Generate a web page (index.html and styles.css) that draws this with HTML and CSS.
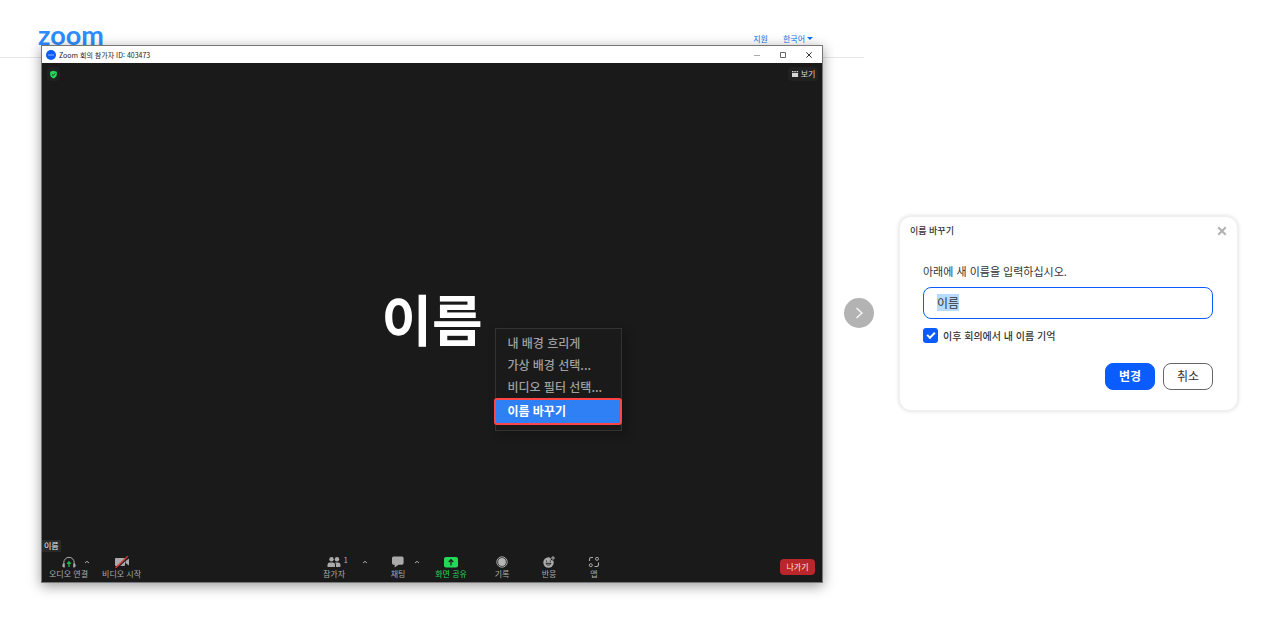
FILE: index.html
```html
<!DOCTYPE html>
<html lang="ko">
<head>
<meta charset="utf-8">
<meta name="viewport" content="width=device-width, initial-scale=1">
<title>Zoom 이름 바꾸기</title>
<link rel="stylesheet" href="styles.css">
</head>
<body>
<main class="guide">
  <section class="site">
    <header class="site-header">
      <a class="logo" href="#">zoom</a>
      <nav class="site-nav">
        <a href="#">지원</a>
        <a href="#" class="language">한국어 <span class="triangle"></span></a>
      </nav>
    </header>

    <div class="window">
      <div class="titlebar">
        <svg class="app-icon" viewBox="0 0 10 10" aria-hidden="true"><circle cx="5" cy="5" r="5" fill="#0b5cff"/><path d="M2 5h6" stroke="#8db6ff" stroke-width="1"/></svg>
        <h1 class="window-title">Zoom 회의 참가자 ID: 403473</h1>
        <div class="window-buttons">
          <button type="button" aria-label="최소화"><svg viewBox="0 0 8 8"><path d="M1 4.500h6" stroke="#aaa"/></svg></button>
          <button type="button" aria-label="최대화"><svg viewBox="0 0 8 8"><path d="M1.500 1.500h5v5h-5z" fill="none" stroke="#666"/></svg></button>
          <button type="button" aria-label="닫기"><svg viewBox="0 0 8 8"><path d="M1.300 1.300l5.400 5.400M6.700 1.300L1.300 6.700" stroke="#333"/></svg></button>
        </div>
      </div>

      <div class="video">
        <div class="video-top">
          <button type="button" class="chip shield" aria-label="보안"><svg viewBox="0 0 10 10"><path d="M5 .7L8.700 2v2.700C8.700 7 7.200 8.600 5 9.400 2.800 8.600 1.300 7 1.300 4.700V2z" fill="#23d959"/><path d="M3.300 5l1.300 1.200 2.200-2.400" fill="none" stroke="#1a1a1a"/></svg></button>
          <button type="button" class="chip view"><svg viewBox="0 0 8 8"><path d="M1 1h1.500v1.300H1zM3.300 1h1.500v1.300H3.300zM5.600 1h1.500v1.300H5.600zM1 3h6.100v4H1z" fill="#d5d5d5"/></svg>보기</button>
        </div>
        <div class="video-stage">
          <div class="participant">
            <p class="participant-name">이름</p>
            <div class="menu" role="menu">
              <button type="button" role="menuitem">내 배경 흐리게</button>
              <button type="button" role="menuitem">가상 배경 선택...</button>
              <button type="button" role="menuitem">비디오 필터 선택...</button>
              <button type="button" role="menuitem" class="menu-active">이름 바꾸기</button>
            </div>
          </div>
        </div>
        <span class="name-tag">이름</span>
      </div>

      <div class="toolbar">
        <div class="tools-left">
          <button type="button" class="tool"><svg viewBox="0 0 16 12"><path d="M2.800 8V6.500a5.200 5.200 0 0 1 10.400 0V8" fill="none" stroke="#aaa"/><path d="M2 7.500h1.800v4H3C1.700 11.500 1.200 10.500 1.400 9zM14 7.500h-1.800v4h.8c1.300 0 1.800-1 1.600-2.500z" fill="#aaa"/><path d="M8 11V6M6.200 7.700L8 5.900l1.800 1.800" fill="none" stroke="#20bf50" stroke-width="1.300"/></svg>오디오 연결</button>
          <button type="button" class="caret audio-caret" aria-label="오디오 옵션"><svg viewBox="0 0 6 6"><path d="M1 4l2-1.700L5 4" fill="none" stroke="#aaa"/></svg></button>
          <button type="button" class="tool"><svg viewBox="0 0 16 12"><rect x="1" y="2" width="10" height="8" rx="1" fill="#aaa"/><path d="M11.500 5L15 2.500v7L11.500 7z" fill="#aaa"/><path d="M2.800 12.500L15 .5" stroke="#1a1a1a" stroke-width="1.200"/><path d="M1.500 12L14 0" stroke="#d93636" stroke-width="1.300"/></svg>비디오 시작</button>
        </div>
        <div class="tools-center">
          <button type="button" class="tool people"><svg viewBox="0 0 14 12"><circle cx="4.500" cy="3.300" r="2.200" fill="#aaa"/><circle cx="10" cy="3.300" r="2.200" fill="#aaa"/><path d="M.5 11V9c0-1.700 1-2.500 2.500-2.500h2.500C7 6.500 8 7.300 8 9v2z" fill="#aaa"/><path d="M9 11V9c0-1-.4-1.900-1-2.500h2.700c1.800 0 2.800.8 2.800 2.500v1.200c0 .5-.3.800-.8.800z" fill="#aaa"/></svg><span class="count">1</span>참가자</button>
          <button type="button" class="caret" aria-label="참가자 옵션"><svg viewBox="0 0 6 6"><path d="M1 4l2-1.700L5 4" fill="none" stroke="#aaa"/></svg></button>
          <button type="button" class="tool chat"><svg viewBox="0 0 14 12"><path d="M2.500.5h8.500a1.600 1.600 0 0 1 1.600 1.600v5a1.600 1.600 0 0 1-1.600 1.600H7.500L3.700 11.500V8.700H2.500A1.600 1.600 0 0 1 1 7.100v-5A1.600 1.600 0 0 1 2.500.5z" fill="#aaa"/></svg>채팅</button>
          <button type="button" class="caret" aria-label="채팅 옵션"><svg viewBox="0 0 6 6"><path d="M1 4l2-1.700L5 4" fill="none" stroke="#aaa"/></svg></button>
          <button type="button" class="tool share"><svg viewBox="0 0 14 12"><rect y="1" width="14" height="10.500" rx="2" fill="#23d959"/><path d="M7 9.500V4M4.700 6L7 3.700 9.300 6" fill="none" stroke="#1a1a1a" stroke-width="1.200"/></svg>화면 공유</button>
          <button type="button" class="tool"><svg viewBox="0 0 12 12"><circle cx="6" cy="6" r="5.200" fill="none" stroke="#aaa"/><circle cx="6" cy="6" r="3.900" fill="#b5b5b5"/></svg>기록</button>
          <button type="button" class="tool"><svg viewBox="0 0 12 12"><circle cx="5.500" cy="6.500" r="5.200" fill="#aaa"/><circle cx="10" cy="2" r="2.500" fill="#1a1a1a"/><path d="M10 0v4M8 2h4" stroke="#aaa"/><path d="M3.500 4.500v1.300M7.300 4.500v1.300M3 7.300h5C7.500 9.700 3.500 9.700 3 7.300z" fill="none" stroke="#1a1a1a" stroke-width=".9"/></svg>반응</button>
          <button type="button" class="tool"><svg viewBox="0 0 12 12"><path d="M1.500 5V3.200c0-1 .7-1.700 1.700-1.700H5M10.500 6.500v2.300c0 1-.7 1.700-1.700 1.700H6.500" fill="none" stroke="#aaa" stroke-width="1.100"/><circle cx="9" cy="2.800" r="1.500" fill="none" stroke="#aaa"/><circle cx="2.800" cy="9.200" r="1.500" fill="none" stroke="#aaa"/></svg>앱</button>
        </div>
        <button type="button" class="leave">나가기</button>
      </div>
    </div>
  </section>

  <svg class="step-arrow" viewBox="0 0 30 30" aria-hidden="true"><circle cx="15" cy="15" r="15" fill="#b3b3b3"/><path d="M12.500 10l5.500 5-5.500 5" fill="none" stroke="#fff" stroke-width="1.200"/></svg>

  <form class="dialog">
    <div class="dialog-head">
      <h2 class="dialog-title">이름 바꾸기</h2>
      <button type="button" class="dialog-close" aria-label="닫기"><svg viewBox="0 0 10 10"><path d="M1.300 1.300l7.400 7.400M8.700 1.300L1.300 8.700" stroke="#b0b0b0" stroke-width="2"/></svg></button>
    </div>
    <label class="field-label" for="name">아래에 새 이름을 입력하십시오.</label>
    <input class="field" id="name" type="text" value="이름">
    <div class="remember">
      <input id="remember" type="checkbox" checked>
      <label for="remember">이후 회의에서 내 이름 기억</label>
    </div>
    <div class="actions">
      <button type="button" class="button primary">변경</button>
      <button type="button" class="button">취소</button>
    </div>
  </form>
</main>
<script src="script.js"></script>
</body>
</html>
```
FILE: styles.css
```css
* { box-sizing: border-box; }

body {
  margin: 0;
  background: #fff;
  color: #333;
  font-family: "Noto Sans CJK KR", "Noto Sans", sans-serif;
  font-size: 8px;
  line-height: 12px;
}

button {
  margin: 0;
  padding: 0;
  border: 0;
  background: none;
  color: inherit;
  font: inherit;
  white-space: nowrap;
}

svg { display: block; flex: none; }

.guide {
  display: grid;
  grid-template-columns: 1fr 30px 364px;
  align-items: center;
  min-height: 100vh;
  padding-right: 42px;
}

/* Web page with the meeting window above it */
.site {
  align-self: stretch;
  display: flex;
  flex-direction: column;
}

.site-header {
  display: flex;
  justify-content: space-between;
  align-items: center;
  height: 58px;
  margin-right: -20px;
  padding: 20px 51px 0 38px;
  border-bottom: 1px solid #e8e8e8;
}

.logo {
  align-self: flex-start;
  color: #2d8cff;
  font: 700 27px/30px Lato, sans-serif;
  text-decoration: none;
}

.site-nav { display: flex; gap: 15px; }
.site-nav a { color: #0e72ed; text-decoration: none; }
.language { display: flex; align-items: center; gap: 2px; }

.triangle {
  border: 3px solid transparent;
  border-top-color: #0e72ed;
  border-bottom: 0;
}

.window {
  position: relative;
  flex: 1;
  display: flex;
  flex-direction: column;
  margin: -13px 21px 43px 41px;
  border: 1px solid #777;
  background: #1a1a1a;
  box-shadow: 0 3px 12px rgba(0, 0, 0, .4);
}

.titlebar {
  display: flex;
  align-items: center;
  height: 17px;
  padding-left: 4px;
  background: #fff;
}

.app-icon { width: 10px; height: 10px; }

.window-title {
  flex: 1;
  margin: 0 0 0 3px;
  color: #222;
  font-size: 7px;
  font-weight: 400;
}

.window-buttons { display: flex; }

.window-buttons button {
  display: flex;
  justify-content: center;
  width: 26px;
}

.window-buttons svg { width: 8px; height: 8px; }

/* Video */
.video {
  flex: 1;
  display: flex;
  flex-direction: column;
  align-items: stretch;
}

.video-top {
  display: flex;
  justify-content: space-between;
  padding: 4px 4px 0 5px;
}

.chip {
  display: flex;
  align-items: center;
  justify-content: center;
  gap: 2px;
  height: 14px;
  border-radius: 4px;
  background: #212121;
  color: #d5d5d5;
}

.shield { width: 13px; }
.shield svg { width: 9px; height: 9px; }
.view { width: 30px; }
.view svg { width: 8px; height: 8px; }

.video-stage {
  flex: 1;
  display: flex;
  align-items: center;
  justify-content: center;
  padding-top: 12px;
}

.participant { position: relative; }

.participant-name {
  margin: 0;
  color: #fff;
  font-size: 55px;
  font-weight: 700;
  line-height: 60px;
}

.menu {
  position: absolute;
  top: 41px;
  left: 114px;
  display: flex;
  flex-direction: column;
  width: 127px;
  padding: 3px 0 5px;
  border: 1px solid #333;
  background: #1a1a1a;
  box-shadow: 4px 4px 10px rgba(0, 0, 0, .25);
}

.menu button {
  height: 22px;
  padding-left: 11px;
  color: #a0a0a0;
  font-size: 12px;
  font-weight: 500;
  text-align: left;
}

.menu .menu-active {
  height: 27px;
  margin: 0 -1px 0 -2px;
  border: 2px solid #ff4545;
  border-radius: 3px;
  background: #3080f5;
  color: #fff;
  font-weight: 700;
}

.name-tag {
  align-self: flex-start;
  padding: 0 2px;
  background: #2a2a2a;
  color: #eee;
}

/* Toolbar */
.toolbar {
  display: flex;
  align-items: center;
  justify-content: space-between;
  height: 30px;
  padding: 0 7px;
  color: #aaa;
}

.tools-left { display: flex; padding-top: 2px; }

.tools-center {
  display: grid;
  grid-template-columns: 46px 16px 36px 16px 52px 50px 44px 46px;
  margin-left: 7px;
  padding-top: 2px;
}

.tool {
  position: relative;
  display: flex;
  flex-direction: column;
  align-items: center;
}

.tool svg { height: 12px; }
.chat { padding-left: 14px; }
.share { color: #23d959; }

.count {
  position: absolute;
  top: -2px;
  right: 9px;
}

.caret {
  display: flex;
  justify-content: center;
  padding-top: 3px;
}

.caret svg { width: 6px; height: 6px; }

.audio-caret {
  width: 10px;
  margin: 0 10px 0 -6px;
}

.leave {
  width: 35px;
  height: 16px;
  border-radius: 4px;
  background: #b9262b;
  color: #ffe8d0;
}

.step-arrow { width: 30px; height: 30px; }

/* Rename dialog */
.dialog {
  margin-left: 25px;
  padding: 8px 10px 20px;
  border: 1px solid #f0f0f0;
  border-radius: 12px;
  background: #fff;
  box-shadow: 0 0 4px rgba(0, 0, 0, .15);
}

.dialog-head {
  display: flex;
  align-items: center;
  justify-content: space-between;
  height: 13px;
}

.dialog-title {
  margin: 0;
  font-size: 9px;
  font-weight: 500;
}

.dialog-close svg { width: 10px; height: 10px; }

.field-label {
  display: block;
  margin: 23px 13px 6px;
  font-size: 11px;
  line-height: 20px;
}

.field {
  display: block;
  width: calc(100% - 27px);
  height: 32px;
  margin-left: 13px;
  padding: 0 13px;
  border: 1px solid #0b5cff;
  border-radius: 8px;
  outline: 0;
  background: #fff;
  color: #333;
  font: inherit;
  font-size: 12px;
}

.field::selection { background: #b8dcff; color: #333; }

.remember {
  display: flex;
  align-items: center;
  gap: 5px;
  margin: 9px 13px 0;
  font-size: 10px;
  font-weight: 500;
  line-height: 15px;
}

.remember input {
  appearance: none;
  display: grid;
  place-items: center;
  width: 15px;
  height: 15px;
  margin: 0;
  border-radius: 3px;
  background: #0b5cff;
}

.remember input:checked::before {
  content: "";
  box-sizing: border-box;
  width: 8px;
  height: 5px;
  margin-bottom: 2px;
  border: solid #fff;
  border-width: 0 0 2px 2px;
  rotate: -45deg;
}

.actions {
  display: flex;
  justify-content: flex-end;
  gap: 8px;
  margin: 20px 14px 0;
}

.button {
  width: 50px;
  height: 27px;
  border: 1px solid #666;
  border-radius: 8px;
  font-size: 12px;
}

.primary {
  border-color: #0b5cff;
  background: #0b5cff;
  color: #fff;
  font-weight: 700;
}
```
FILE: script.js
```js
const nameField = document.getElementById("name");
nameField.focus();
nameField.select();
```
